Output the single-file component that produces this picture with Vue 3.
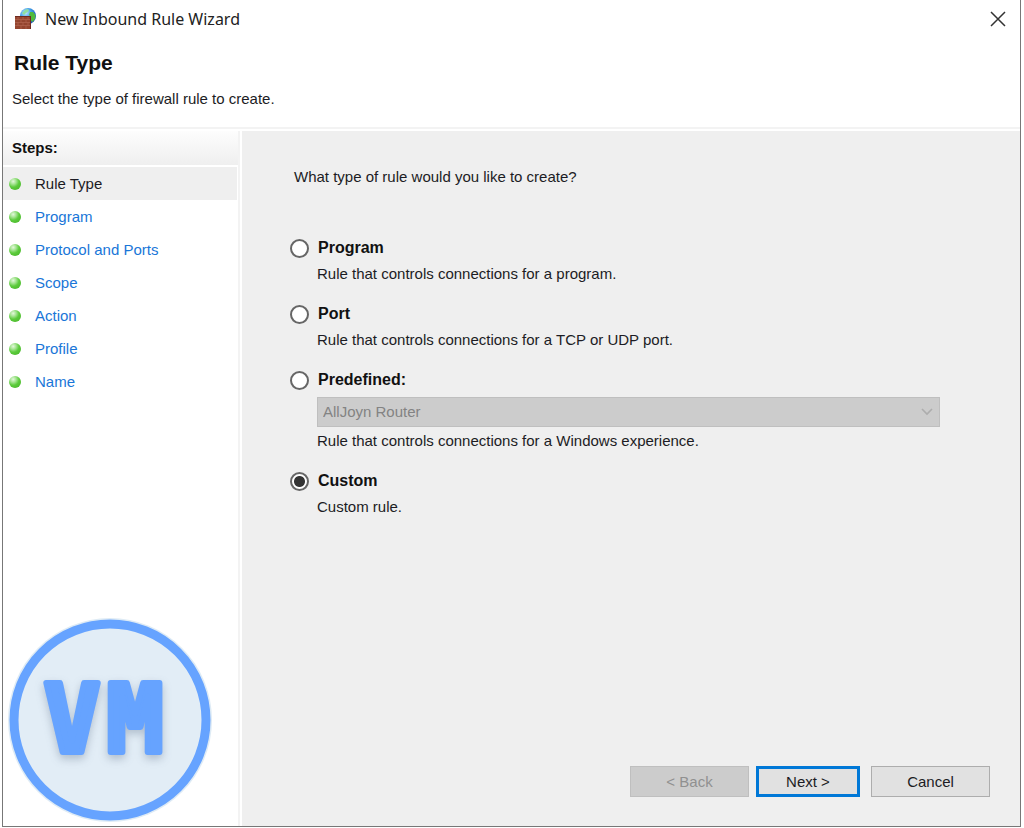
<script setup>
import { ref } from 'vue'

const steps = ['Rule Type', 'Program', 'Protocol and Ports', 'Scope', 'Action', 'Profile', 'Name']
const current = ref('Rule Type')

const options = [
  { id: 'program', label: 'Program', note: 'Rule that controls connections for a program.' },
  { id: 'port', label: 'Port', note: 'Rule that controls connections for a TCP or UDP port.' },
  { id: 'predefined', label: 'Predefined:', note: 'Rule that controls connections for a Windows experience.', choices: ['AllJoyn Router'] },
  { id: 'custom', label: 'Custom', note: 'Custom rule.' },
]
const selected = ref('custom')
</script>

<template>
  <div class="desktop">
    <main class="window">
      <header class="titlebar">
        <svg class="app-icon" viewBox="0 0 22 22" aria-hidden="true">
          <defs>
            <radialGradient id="globe" cx="0.35" cy="0.3" r="0.8">
              <stop offset="0" stop-color="#c4ecff" />
              <stop offset="0.45" stop-color="#3d9be6" />
              <stop offset="1" stop-color="#1546a8" />
            </radialGradient>
          </defs>
          <circle cx="13" cy="8" r="8" fill="url(#globe)" />
          <path d="M15 4l3 0 2.500 3-.5 4-2.500 3-2-2 .5-3-2-2z" fill="#4fbb3c" />
          <path d="M7 5l3-3 3-1 1 2-3 2-2 2z" fill="#8fe0a0" />
          <rect x="0" y="8" width="16" height="13" fill="#94452f" />
          <path d="M0 8h16v1H0zM15 8h1v13h-1z" fill="#6e2a20" />
          <path d="M0 11.500h15M0 14.500h15M0 17.500h15M3 9v2.500M8 9v2.500M13 9v2.500M6 11.500v3M11 11.500v3M3 14.500v3M8 14.500v3M13 14.500v3M6 17.500V21M11 17.500V21" stroke="#b56a55" stroke-width="0.6" fill="none" />
        </svg>
        <span class="title">New Inbound Rule Wizard</span>
        <button class="close" type="button" aria-label="Close">
          <svg viewBox="0 0 16 16" aria-hidden="true"><path d="M1 1l14 14M15 1L1 15" stroke="#333" stroke-width="1.500" fill="none" /></svg>
        </button>
      </header>

      <section class="heading">
        <h1>Rule Type</h1>
        <p>Select the type of firewall rule to create.</p>
      </section>

      <div class="body">
        <nav class="sidebar" aria-labelledby="steps-title">
          <h2 id="steps-title">Steps:</h2>
          <ul>
            <li v-for="step in steps" :key="step" :class="{ active: step === current }">
              <i class="ball"></i>
              <a href="#" :aria-current="step === current ? 'step' : null" @click.prevent="current = step">{{ step }}</a>
            </li>
          </ul>
          <svg class="logo" viewBox="0 0 206 206" role="img" aria-label="VM">
            <circle cx="103" cy="103" r="102" fill="#deebf5" />
            <circle cx="103" cy="103" r="96" fill="#e2edf6" stroke="#66a3ff" stroke-width="9" />
            <text class="letters" y="135" x="65 128">VM</text>
          </svg>
        </nav>

        <section class="content">
          <form class="form" @submit.prevent>
            <p class="question">What type of rule would you like to create?</p>
            <div v-for="o in options" :key="o.id" class="option">
              <label class="choice">
                <input v-model="selected" type="radio" name="rule" :value="o.id" />
                <span>{{ o.label }}</span>
              </label>
              <div v-if="o.choices" class="combo">
                <select disabled aria-label="Predefined rule">
                  <option v-for="c in o.choices" :key="c">{{ c }}</option>
                </select>
                <svg viewBox="0 0 12 8" aria-hidden="true"><path d="M1 1l5 5 5-5" stroke="#adadad" stroke-width="1.600" fill="none" /></svg>
              </div>
              <p class="note">{{ o.note }}</p>
            </div>
          </form>

          <footer class="actions">
            <button type="button" class="btn back" disabled>&lt; Back</button>
            <button type="button" class="btn next">Next &gt;</button>
            <button type="button" class="btn cancel">Cancel</button>
          </footer>
        </section>
      </div>
    </main>
  </div>
</template>

<style>
body {
  margin: 0;
  background: #fff;
}
</style>

<style scoped>
.desktop {
  box-sizing: border-box;
  min-height: 100vh;
  padding: 0 3px 1px 2px;
  display: flex;
  font-family: "Liberation Sans", Arial, sans-serif;
  font-size: 15px;
  line-height: 24px;
  color: #1c1c24;
  background: #fff;
}
.window {
  flex: 1;
  display: flex;
  flex-direction: column;
  border: 1px solid #777;
  border-top: 0;
  background: #fff;
}
p, h1, h2, ul {
  margin: 0;
  padding: 0;
}
.titlebar {
  display: flex;
  align-items: center;
  height: 38px;
  padding: 0 14px 0 12px;
}
.app-icon {
  width: 22px;
  height: 22px;
  margin-right: 8px;
}
.title {
  flex: 1;
  font-family: "Noto Sans", "Open Sans", sans-serif;
  font-size: 16px;
  color: #222;
}
.close {
  display: flex;
  padding: 0;
  border: 0;
  background: none;
}
.close svg {
  width: 16px;
  height: 16px;
}
.heading {
  height: 91px;
  box-sizing: border-box;
  padding: 13px 9px 0;
  border-bottom: 2px solid #f3f3f3;
}
.heading h1 {
  padding-left: 2px;
  font-size: 21px;
  color: #111;
}
.heading p {
  margin-top: 12px;
}
.body {
  flex: 1;
  display: flex;
  padding-top: 2px;
}
.sidebar {
  flex: 0 0 235px;
  display: flex;
  flex-direction: column;
  border-right: 2px solid #f3f3f3;
  margin-right: 2px;
}
.sidebar h2 {
  padding: 5px 9px;
  font-size: 15px;
  color: #111;
  background: linear-gradient(#fdfdfd, #efefef);
}
.sidebar ul {
  list-style: none;
  padding-top: 2px;
}
.sidebar li {
  display: flex;
  align-items: center;
  height: 33px;
  margin-right: 1px;
  padding-left: 6px;
}
.sidebar li.active {
  background: #efefef;
}
.sidebar a {
  color: #1976d8;
  text-decoration: none;
}
.sidebar li.active a {
  color: #1c1c24;
}
.ball {
  width: 12px;
  height: 12px;
  margin-right: 14px;
  border-radius: 50%;
  background: radial-gradient(circle at 35% 28%, #e4f8dc 0, #a5e492 25%, #5ccb3c 50%, #4dbb2e 80%, #8ccf7c 100%);
}
.logo {
  width: 206px;
  height: 206px;
  margin: auto 0 3px 4px;
}
.letters {
  font-family: "DejaVu Sans Mono", monospace;
  font-size: 94px;
  font-weight: 700;
  text-anchor: middle;
  fill: #66a3ff;
  stroke: #66a3ff;
  stroke-width: 6px;
  stroke-linejoin: round;
  filter: drop-shadow(0 4px 4px rgba(60, 80, 110, 0.3));
}
.content {
  flex: 1;
  display: flex;
  flex-direction: column;
  justify-content: space-between;
  background: #efefef;
}
.form {
  padding: 34px 80px 0 48px;
}
.question {
  margin: 0 0 47px 4px;
}
.option {
  margin-bottom: 16px;
}
.choice {
  display: flex;
  align-items: center;
  font-size: 16px;
  font-weight: 700;
  color: #111;
}
.choice input {
  appearance: none;
  box-sizing: border-box;
  width: 19px;
  height: 19px;
  margin: 0 9px 0 0;
  border: 2px solid #666;
  border-radius: 50%;
  background: #fff;
}
.choice input:checked {
  background: radial-gradient(circle, #333 5px, #fff 6px);
}
.note {
  padding: 2px 0 0 27px;
}
.combo {
  position: relative;
  margin: 5px 0 0 27px;
}
.combo select {
  display: block;
  appearance: none;
  box-sizing: border-box;
  width: 100%;
  height: 30px;
  padding: 0 5px;
  border: 1px solid #bfbfbf;
  border-radius: 0;
  background: #ccc;
  color: #838383;
  font: inherit;
  opacity: 1;
}
.combo svg {
  position: absolute;
  right: 7px;
  top: 11px;
  width: 12px;
  height: 8px;
}
.actions {
  display: flex;
  justify-content: flex-end;
  padding: 0 30px 29px;
}
.btn {
  box-sizing: border-box;
  width: 119px;
  height: 31px;
  padding: 0;
  border: 1px solid #adadad;
  border-radius: 0;
  background: #e1e1e1;
  color: #1c1c24;
  font: inherit;
}
.back {
  border-color: #bfbfbf;
  background: #ccc;
  color: #909090;
}
.next {
  width: 104px;
  margin: 0 11px 0 7px;
  border: 3px solid #0078d7;
}
</style>
